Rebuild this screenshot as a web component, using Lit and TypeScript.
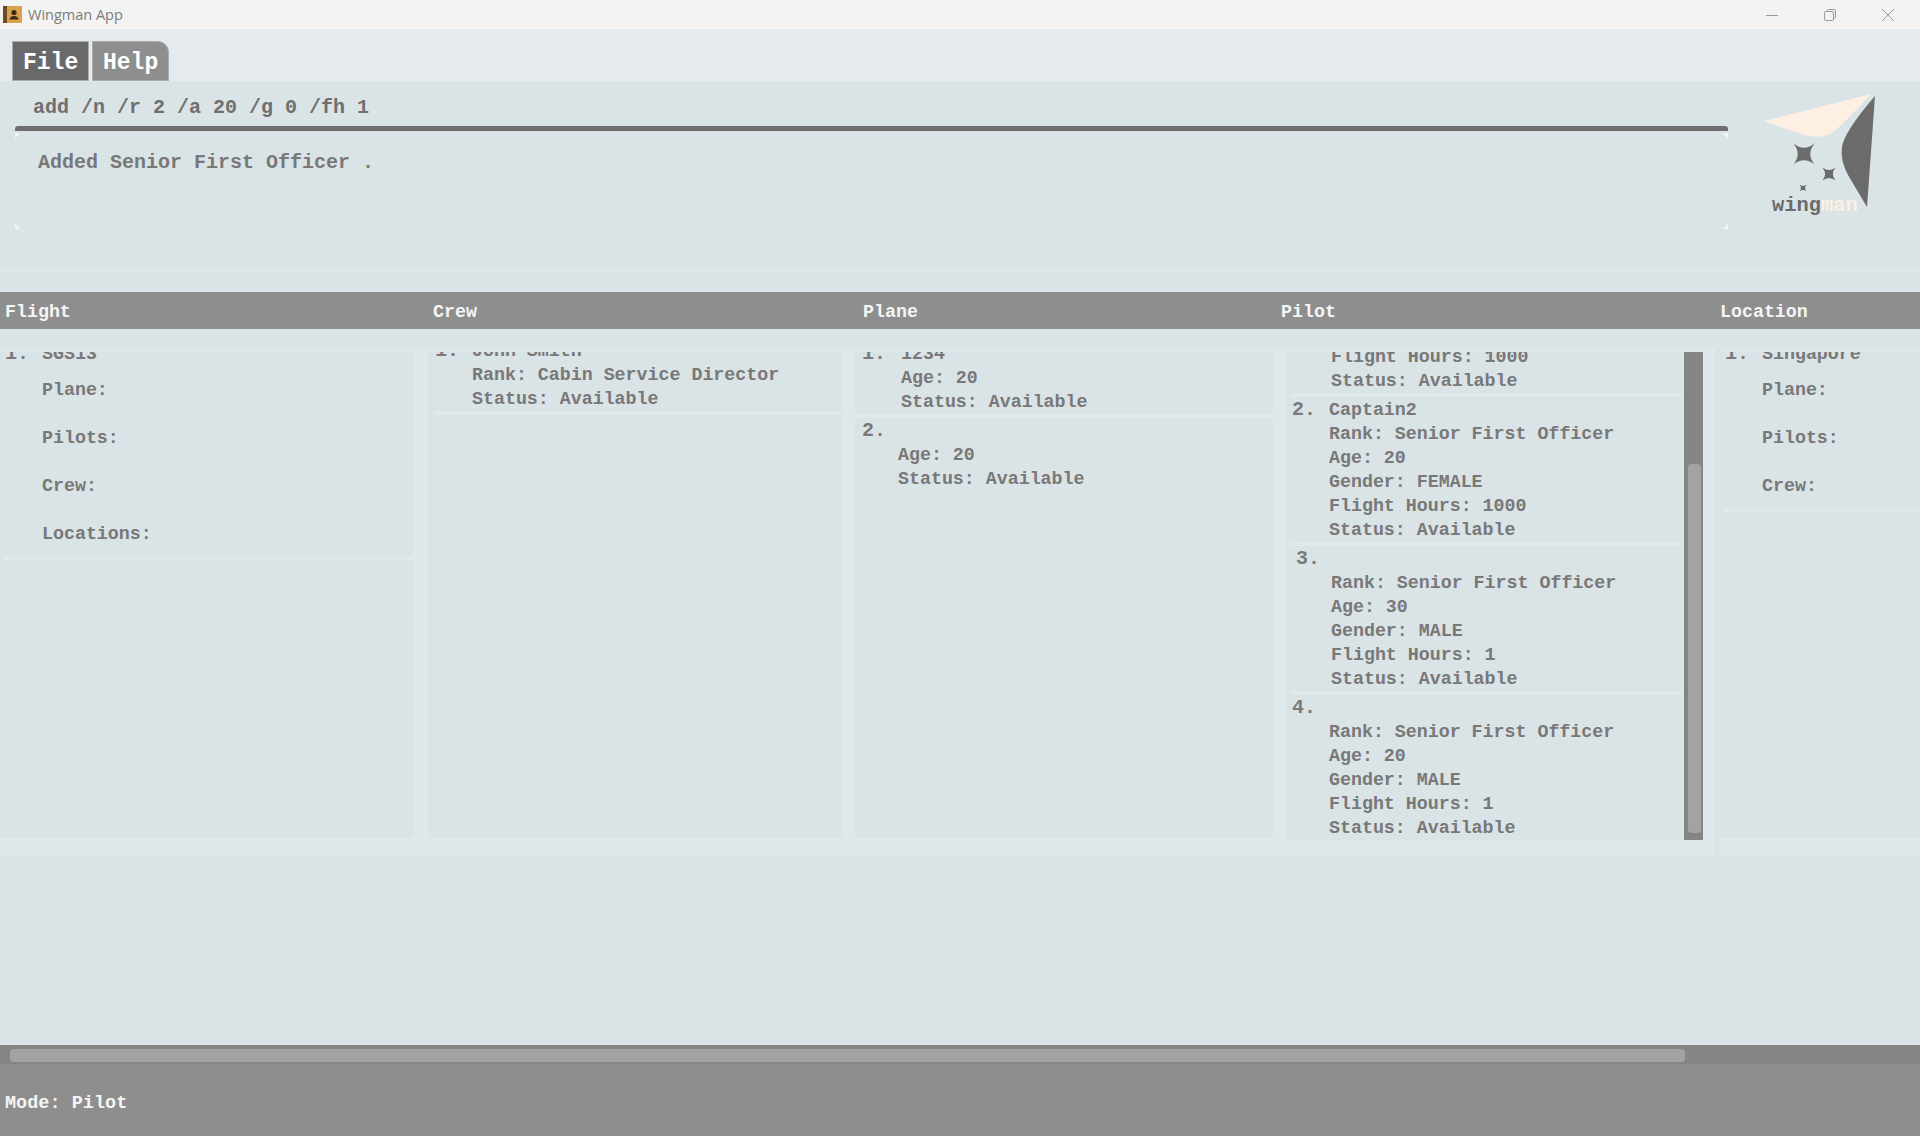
import { LitElement, html, css, svg } from "lit";
import { customElement } from "lit/decorators.js";

type Item = { n?: string; name?: string; lines: string[]; cls?: string };
type Col = { title: string; cls: string; items: Item[] };

const rows = (rank: string, age: string, g: string, fh: string) => [
  `Rank: ${rank}`, `Age: ${age}`, `Gender: ${g}`, `Flight Hours: ${fh}`, "Status: Available",
];

const COLS: Col[] = [
  { title: "Flight", cls: "flight", items: [{ n: "1.", name: "SGS13", cls: "wide", lines: ["Plane:", "Pilots:", "Crew:", "Locations:"] }] },
  { title: "Crew", cls: "crew", items: [{ n: "1.", name: "John Smith", lines: ["Rank: Cabin Service Director", "Status: Available"] }] },
  { title: "Plane", cls: "plane", items: [
    { n: "1.", name: "1234", lines: ["Age: 20", "Status: Available"], cls: "plane1" },
    { n: "2.", name: "", lines: ["Age: 20", "Status: Available"], cls: "plane2" },
  ] },
  { title: "Pilot", cls: "pilot", items: [
    { lines: ["Flight Hours: 1000", "Status: Available"], cls: "p1" },
    { n: "2.", name: "Captain2", lines: rows("Senior First Officer", "20", "FEMALE", "1000"), cls: "p2" },
    { n: "3.", name: "", lines: rows("Senior First Officer", "30", "MALE", "1"), cls: "p3" },
    { n: "4.", name: "", lines: rows("Senior First Officer", "20", "MALE", "1"), cls: "p2" },
  ] },
  { title: "Location", cls: "location", items: [{ n: "1.", name: "Singapore", cls: "wide", lines: ["Plane:", "Pilots:", "Crew:"] }] },
];

const star = (cx: number, cy: number, r: number) => {
  const k = r * 0.2;
  return svg`<path d="M${cx - r} ${cy - r}Q${cx} ${cy - k} ${cx + r} ${cy - r}Q${cx + k} ${cy} ${cx + r} ${cy + r}Q${cx} ${cy + k} ${cx - r} ${cy + r}Q${cx - k} ${cy} ${cx - r} ${cy - r}Z" fill="#6b6b6b"/>`;
};

@customElement("app-root")
export class AppRoot extends LitElement {
  static styles = css`
    :host { display: block; width: 1920px; height: 1136px; overflow: hidden; background: #dae3e6; font-family: "Liberation Mono", monospace; font-weight: 700; color: #787878; }
    .app { display: flex; flex-direction: column; height: 1136px; }
    .title { height: 29px; flex: none; background: #f3f3f3; display: flex; align-items: center; font: 400 14.5px "Open Sans", sans-serif; color: #7c7c7c; }
    .appicon { width: 19px; height: 18px; margin: 0 6px 0 3px; }
    .spacer { flex: 1; }
    .winbtn { width: 14px; height: 14px; margin-right: 44px; }
    .winbtn:last-child { margin-right: 25px; }
    .menu { height: 52px; flex: none; background: #e4eaed; display: flex; align-items: flex-end; padding-left: 12px; gap: 3px; }
    .tab { width: 77px; height: 40px; box-sizing: border-box; border: 1px solid #a8abac; font-size: 23px; line-height: 42px; color: #fff; padding-left: 10px; background: #8e8e8e; }
    .tab.file { background: #696969; }
    .tab.help { border-top-right-radius: 11px; }
    .top { height: 192px; flex: none; display: flex; box-sizing: border-box; border-bottom: 4px solid #dfe8ea; }
    .cmdcol { width: 1713px; margin-left: 15px; flex: none; }
    .cmd { height: 45px; box-sizing: border-box; padding: 15px 0 0 18px; font-size: 20px; line-height: 24px; color: #6f6f6f; }
    .rule { height: 5px; background: #6e6e6e; border-radius: 3px 3px 0 0; }
    .result {
      height: 96px; margin-top: 2px; box-sizing: border-box; padding: 18px 0 0 23px; font-size: 20px; line-height: 24px;
      background:
        linear-gradient(135deg, #f2f5f6 4px, transparent 4px) top left / 6px 6px no-repeat,
        linear-gradient(225deg, #f2f5f6 4px, transparent 4px) top right / 6px 6px no-repeat,
        linear-gradient(45deg, #f2f5f6 4px, transparent 4px) bottom left / 6px 6px no-repeat,
        linear-gradient(315deg, #f2f5f6 4px, transparent 4px) bottom right / 6px 6px no-repeat;
    }
    .logo { width: 192px; height: 188px; flex: none; margin-top: -81px; position: relative; }
    .logo svg { position: absolute; left: 0; top: 81px; }
    .wordmark { position: absolute; left: 44px; top: 194px; font-size: 20.4px; line-height: 24px; color: #6b6b6b; }
    .wordmark span { color: #fdefe2; }
    .gap19 { height: 19px; flex: none; }
    .heads { height: 37px; flex: none; background: #8e8e8e; display: grid; grid-template-columns: 428px 430px 418px 439px 1fr; font-size: 18.3px; line-height: 41px; color: #f5f5f5; }
    .heads div { padding-left: 5px; }
    .cols { flex: none; height: 506px; margin-top: 19px; display: grid; grid-template-columns: 428px 427px 432px 428px 205px; width: 1920px; }
    .col { background: #dfe8ea; padding: 4px 14px 16px 0; box-sizing: border-box; min-width: 0; }
    .col.flight { padding-right: 15px; }
    .col.crew { padding-right: 12px; }
    .col.pilot { padding-right: 12px; }
    .col.location { padding: 4px 0 16px 0; margin-left: 5px; }
    .panel { height: 486px; background: #dae3e6; overflow: hidden; position: relative; }
    .pilot .panel { height: 488px; }
    .list { font-size: 18.3px; line-height: 24px; }
    .flight .list { margin-top: -10px; }
    .crew .list { margin-top: -13px; }
    .plane .list { margin-top: -10px; }
    .pilot .list { margin-top: -7px; width: 397px; }
    .location .list { margin-top: -10px; }
    .item { border-bottom: 4px solid #dfe8ea; padding: 0 0 0 5px; }
    .wide { padding-bottom: 11px; }
    .flight .item { margin-left: 4px; padding-left: 1px; }
    .crew .item { margin-left: 6px; padding-left: 1px; }
    .plane .item { padding-left: 7px; }
    .location .item { margin-left: 4px; padding-left: 1px; }
    .head { display: flex; height: 24px; }
    .num { font-size: 20px; width: 37px; flex: none; color: #7a7a7a; }
    .det { padding-left: 37px; }
    .wide .det div { height: 48px; }
    .wide .det div:last-child { height: 24px; }
    .wide .det { margin-top: 12px; }
    .plane .plane1 .det { padding-left: 39px; }
    .plane .plane1 .num { width: 39px; }
    .plane .plane2 { padding-top: 1px; border-bottom: 0; }
    .plane .plane2 .det { padding-left: 36px; }
    .pilot .p1 { padding-left: 4px; margin-left: 4px; }
    .pilot .p1 .det { padding-left: 36px; }
    .pilot .p2 { padding-top: 1px; margin-left: 4px; padding-left: 1px; }
    .pilot .p3 { padding-top: 1px; margin-left: 4px; padding-left: 5px; }
    .pilot .p3 .det { padding-left: 35px; }
    .pilot .p3 .num { width: 31px; }
    .vbar { position: absolute; right: 0; top: 0; width: 19px; height: 488px; background: #858585; box-sizing: border-box; padding: 112px 2px 7px 4px; }
    .vthumb { height: 100%; background: #a3a3a3; border-radius: 4px; }
    .fill { flex: 1; }
    .hbar { height: 19px; flex: none; background: #858585; box-sizing: border-box; padding: 4px 0 2px 10px; }
    .hthumb { width: 1675px; height: 13px; background: #a3a3a3; border-radius: 4px; }
    .foot { height: 72px; flex: none; background: #8e8e8e; font-size: 18.55px; line-height: 24px; padding: 28px 0 0 5px; box-sizing: border-box; color: #f5f5f5; }
  `;

  private logo() {
    return html`<svg width="192" height="130" viewBox="1728 81 192 130">
      <path d="M1871 94L1764 121L1798 133Q1818 140 1830 134Q1838 130 1871 94Z" fill="#fdefe2"/>
      <path d="M1875 96Q1844 132 1842 147Q1840 160 1848 175L1867 207Z" fill="#6b6b6b"/>
      ${star(1804, 154, 10.5)}${star(1829, 174, 6.5)}${star(1803, 188, 3.5)}
    </svg>
    <div class="wordmark">wing<span>man</span></div>`;
  }

  private item(i: Item) {
    return html`<div class="item ${i.cls ?? ""}">
      ${i.n ? html`<div class="head"><span class="num">${i.n}</span><span>${i.name}</span></div>` : ""}
      <div class="det">${i.lines.map((l) => html`<div>${l}</div>`)}</div>
    </div>`;
  }

  render() {
    return html`<div class="app">
      <div class="title">
        <svg class="appicon" viewBox="0 0 19 18">
          <rect x="0" y="0" width="19" height="17" rx="1" fill="#d9a24e"/>
          <rect x="0" y="0" width="4" height="17" fill="#6a4a22"/>
          <circle cx="11" cy="6.500" r="2.600" fill="#3a2a16"/>
          <path d="M6.500 13.500Q7 10 11 10Q15 10 15.500 13.500Z" fill="#3a2a16"/>
        </svg>
        Wingman App
        <span class="spacer"></span>
        <svg class="winbtn" viewBox="0 0 14 14"><path d="M1 7.500H13" stroke="#9a9a9a" fill="none"/></svg>
        <svg class="winbtn" viewBox="0 0 14 14"><rect x="1.500" y="3.500" width="9" height="9" rx="1.500" stroke="#9a9a9a" fill="none"/><path d="M4 3V2.500Q4 1.500 5.500 1.500H11Q12.500 1.500 12.500 3V9Q12.500 10 11 10.300" stroke="#9a9a9a" fill="none"/></svg>
        <svg class="winbtn" viewBox="0 0 14 14"><path d="M1 1L13 13M13 1L1 13" stroke="#9a9a9a" fill="none"/></svg>
      </div>
      <div class="menu"><div class="tab file">File</div><div class="tab help">Help</div></div>
      <div class="top">
        <div class="cmdcol">
          <div class="cmd">add /n /r 2 /a 20 /g 0 /fh 1</div>
          <div class="rule"></div>
          <div class="result">Added Senior First Officer .</div>
        </div>
        <div class="logo">${this.logo()}</div>
      </div>
      <div class="gap19"></div>
      <div class="heads">
        ${COLS.map((c, i) => html`<div class="h${i}">${c.title}</div>`)}
      </div>
      <div class="cols">
        ${COLS.map((c) => html`<div class="col ${c.cls}">
          <div class="panel">
            <div class="list">${c.items.map((i) => this.item(i))}</div>
            ${c.cls === "pilot" ? html`<div class="vbar"><div class="vthumb"></div></div>` : ""}
          </div>
        </div>`)}
      </div>
      <div class="fill"></div>
      <div class="hbar"><div class="hthumb"></div></div>
      <div class="foot">Mode: Pilot</div>
    </div>`;
  }
}
